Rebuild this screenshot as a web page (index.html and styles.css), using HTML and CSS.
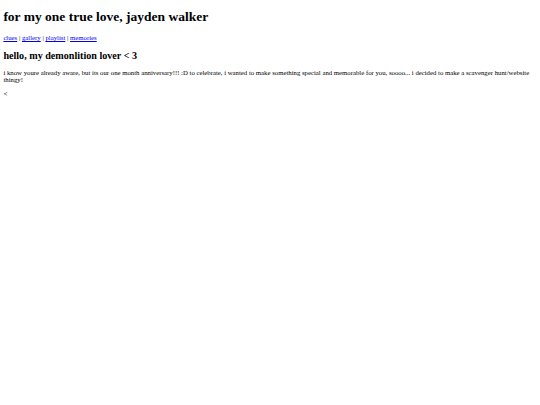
FILE: index.html
```html
<!DOCTYPE html>
<html>
<head>
<meta charset="utf-8">
<link rel="stylesheet" href="styles.css">
</head>
<body class="page">
<h1 class="title">for my one true love, jayden walker</h1>
<p class="nav"><a href="#">clues</a> | <a href="#">gallery</a> | <a href="#">playlist</a> | <a href="#">memories</a></p>
<h2 class="greeting">hello, my demonlition lover &lt; 3</h2>
<p class="text">i know youre already aware, but its our one month anniversary!!! :D to celebrate, i wanted to make something special and memorable for you, soooo... i decided to make a scavenger hunt/website thingy!</p>
<p class="text">&lt;</p>
</body>
</html>
```
FILE: styles.css
```css
html, body { background: #fff; }
.page {
  margin: 3.375px;
  font-family: "Liberation Serif", "Times New Roman", serif;
  font-size: 6.75px;
  color: #000;
}
.title {
  font-size: 13.5px;
  margin: 6px 0 9.05px;
}
.nav, .text {
  margin: 6.75px 0;
}
.nav a { color: #0000ee; }
.greeting {
  font-size: 10.125px;
  margin: 8.4px 0;
}
```
